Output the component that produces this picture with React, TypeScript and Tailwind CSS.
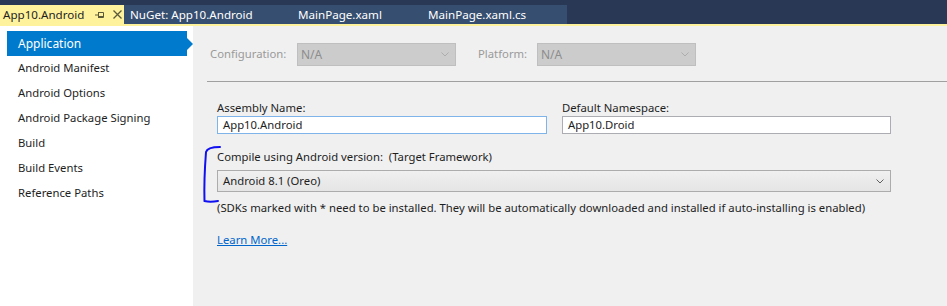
import { ReactNode } from "react";

const font = { fontFamily: '"Segoe UI", "Noto Sans", "Open Sans", sans-serif' };

const navItems = [
  "Application",
  "Android Manifest",
  "Android Options",
  "Android Package Signing",
  "Build",
  "Build Events",
  "Reference Paths"
];

function Chevron({ className }: { className?: string }) {
  return (
    <svg width="8" height="5" viewBox="0 0 8 5" className={className}>
      <path d="M0.5 0.5 L4 4 L7.5 0.5" fill="none" stroke="currentColor" strokeWidth="1" />
    </svg>
  );
}

function DisabledSelect({ width }: { width: string }) {
  return (
    <div
      className={`${width} flex h-[23px] items-center justify-between border border-[#bfbfbf] bg-[#cccccc] pl-[3px] pr-[6px] text-[12px] text-[#8d8d8d]`}
    >
      <span>N/A</span>
      <Chevron className="text-[#adadad]" />
    </div>
  );
}

function Field({ label, value, width, focused }: { label: string; value: string; width: string; focused?: boolean }) {
  return (
    <div className="flex flex-col">
      <span className="h-[17px] leading-[17px] text-[#1e1e1e]">{label}</span>
      <div
        className={`${width} h-[18px] border bg-white pl-[5px] leading-[16px] text-[#1e1e1e] ${
          focused ? "border-[#7eb4ea]" : "border-[#abadb3]"
        }`}
      >
        {value}
      </div>
    </div>
  );
}

function Tab({ children, className }: { children: ReactNode; className?: string }) {
  return <div className={`flex h-[19px] items-center whitespace-nowrap ${className ?? ""}`}>{children}</div>;
}

export default function App() {
  return (
    <div className="relative h-[306px] w-[947px] overflow-hidden bg-[#f0f0f0] text-[11.3px]" style={font}>
      {/* document tabs */}
      <div className="flex h-[24px] items-end bg-[#293955] text-[11.6px]">
        <Tab className="w-[124px] bg-[#fff29d] pl-[3px] text-[#1e1e1e]">
          <span className="w-[92px]">App10.Android</span>
          <svg width="10" height="8" viewBox="0 0 10 8" className="text-[#5a5a3a]">
            <path d="M0 4 H3 M3.5 1 V7 M3.5 1.5 H8.5 V6.5 H3.5 M3.5 5.5 H8.5" fill="none" stroke="currentColor" strokeWidth="1" />
          </svg>
          <svg width="9" height="9" viewBox="0 0 9 9" className="ml-[8px] text-[#5a5a3a]">
            <path d="M0.5 0.5 L8.5 8.5 M8.5 0.5 L0.5 8.5" fill="none" stroke="currentColor" strokeWidth="1.3" />
          </svg>
        </Tab>
        <Tab className="w-[443px] bg-[#364e6f] pl-[6px] text-white">
          <span className="w-[168px]">NuGet: App10.Android</span>
          <span className="w-[130px]">MainPage.xaml</span>
          <span>MainPage.xaml.cs</span>
        </Tab>
      </div>
      <div className="h-[2px] bg-[#fff29d]" />

      <div className="flex h-[280px]">
        {/* sidebar */}
        <div className="w-[193px] bg-white pt-[5px]">
          {navItems.map((item, i) =>
            i === 0 ? (
              <div key={item} className="flex h-[25px] items-center">
                <div className="ml-[7px] flex h-[25px] w-[180px] items-center bg-[#007acc] pl-[11px] text-[12px] text-white">
                  {item}
                </div>
                <div className="h-0 w-0 border-y-[6px] border-l-[6px] border-y-transparent border-l-[#007acc]" />
              </div>
            ) : (
              <div key={item} className="flex h-[25px] items-center pl-[18px] text-[#1e1e1e]">
                {item}
              </div>
            )
          )}
        </div>

        {/* content */}
        <div className="flex flex-1 flex-col pl-[14px] pt-[17px]">
          <div className="ml-[3px] flex items-center">
            <span className="w-[87px] text-[#9a9a9a]">Configuration:</span>
            <DisabledSelect width="w-[159px]" />
            <span className="ml-[22px] w-[59px] text-[#9a9a9a]">Platform:</span>
            <DisabledSelect width="w-[159px]" />
          </div>
          <div className="mt-[15px] h-px bg-[#a0a0a0]" />

          <div className="ml-[10px] mt-[17px] flex gap-[15px]">
            <Field label="Assembly Name:" value="App10.Android" width="w-[330px]" focused />
            <Field label="Default Namespace:" value="App10.Droid" width="w-[329px]" />
          </div>

          <div className="ml-[10px] mt-[14px] flex flex-col">
            <span className="h-[22px] leading-[18px] text-[#1e1e1e]">Compile using Android version:&nbsp; (Target Framework)</span>
            <div className="flex h-[22px] w-[674px] items-center justify-between border border-[#acacac] bg-gradient-to-b from-[#f0f0f0] to-[#e5e5e5] pl-[5px] pr-[6px] text-[#1e1e1e]">
              <span>Android 8.1 (Oreo)</span>
              <Chevron className="text-[#606060]" />
            </div>
            <span className="mt-[8px] text-[#1e1e1e]">
              (SDKs marked with * need to be installed. They will be automatically downloaded and installed if auto-installing is enabled)
            </span>
            <a className="mt-[15px] w-fit text-[#0066cc] underline" href="#">
              Learn More...
            </a>
          </div>
        </div>
      </div>

      {/* hand-drawn annotation bracket */}
      <svg className="pointer-events-none absolute left-0 top-0" width="947" height="306">
        <path
          d="M220 147 C212 147 207 148 206 152 C205 165 204 185 204.5 201 C208 202 213 202 218 201"
          fill="none"
          stroke="#1010f0"
          strokeWidth="2"
          strokeLinecap="round"
        />
      </svg>
    </div>
  );
}
